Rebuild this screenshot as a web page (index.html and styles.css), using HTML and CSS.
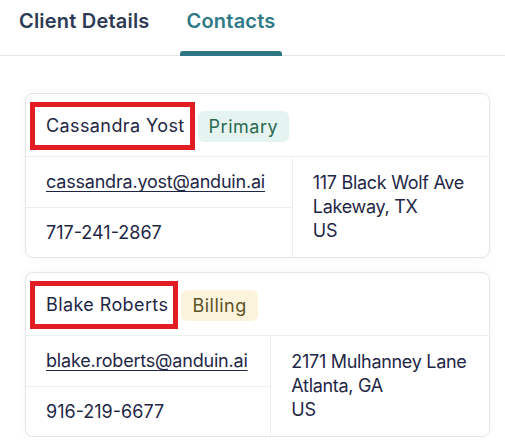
FILE: index.html
```html
<!DOCTYPE html>
<html lang="en">

<head>
  <meta charset="UTF-8">
  <meta name="viewport" content="width=device-width, initial-scale=1.0">
  <title>Contacts</title>
  <link rel="stylesheet" href="styles.css">
</head>

<body>
  <div class="tabs">
    <div class="tab">Client Details</div>
    <div class="tab active">Contacts</div>
  </div>

  <div class="contacts">
    <div class="card">
      <div class="card-header">
        <span class="name">Cassandra Yost</span>
        <span class="badge primary">Primary</span>
      </div>
      <table class="info">
        <tr>
          <td class="cell"><a href="#">cassandra.yost@anduin.ai</a></td>
          <td class="cell address" rowspan="2">117 Black Wolf Ave<br>Lakeway, TX<br>US</td>
        </tr>
        <tr>
          <td class="cell">717-241-2867</td>
        </tr>
      </table>
    </div>

    <div class="card">
      <div class="card-header">
        <span class="name">Blake Roberts</span>
        <span class="badge billing">Billing</span>
      </div>
      <table class="info">
        <tr>
          <td class="cell"><a href="#">blake.roberts@anduin.ai</a></td>
          <td class="cell address" rowspan="2">2171 Mulhanney Lane<br>Atlanta, GA<br>US</td>
        </tr>
        <tr>
          <td class="cell">916-219-6677</td>
        </tr>
      </table>
    </div>
  </div>
</body>

</html>
```

FILE: styles.css
```css
* {
  margin: 0;
  padding: 0;
  box-sizing: border-box;
}

body {
  background: #fff;
  font-family: Inter, "Noto Sans", sans-serif;
  color: #1f2747;
}

.tabs {
  display: flex;
  gap: 23px;
  padding-left: 12px;
  height: 56px;
  border-bottom: 1px solid #e3e5e8;
}

.tab {
  position: relative;
  padding: 9px 7px 0 7px;
  font-size: 20px;
  line-height: 24px;
  font-weight: 600;
  letter-spacing: 0.2px;
  color: #2d3a55;
}

.tab.active {
  color: #2f7a86;
}

.tab.active::after {
  content: "";
  position: absolute;
  left: 0;
  right: 0;
  bottom: -1px;
  height: 5px;
  border-radius: 3px 3px 0 0;
  background: #2e7682;
}

.contacts {
  display: flex;
  flex-direction: column;
  gap: 14px;
  padding: 37px 15px 0 25px;
}

.card {
  border: 1px solid #e3e5e8;
  border-radius: 8px;
  box-shadow: 0 0 10px rgba(0, 0, 0, 0.04);
  background: #fff;
}

.card-header {
  display: flex;
  align-items: center;
  gap: 3px;
  padding: 8px 4px 6px 4px;
  border-bottom: 1px solid #eceef0;
}

.name {
  border: 5px solid #e21d23;
  padding: 0 5px 0 11px;
  height: 48px;
  line-height: 38px;
  font-size: 18px;
  letter-spacing: 0.4px;
  color: #1e2645;
}

.badge {
  height: 31px;
  line-height: 31px;
  padding: 0 11px;
  border-radius: 6px;
  font-size: 18px;
  letter-spacing: 0.5px;
}

.primary {
  background: #e6f4f1;
  color: #2c6a52;
}

.billing {
  background: #fbf3dc;
  color: #5e5125;
}

.info {
  width: 100%;
  border-collapse: collapse;
  font-size: 18px;
}

.cell {
  height: 50px;
  padding: 0 20px;
  vertical-align: middle;
  white-space: nowrap;
}

tr:first-child .cell:first-child {
  border-bottom: 1px solid #eceef0;
}

.cell a {
  color: #1f2747;
  text-decoration: underline;
  text-underline-offset: 3px;
  letter-spacing: -0.2px;
}

.address {
  border-left: 1px solid #eceef0;
  line-height: 24px;
  letter-spacing: -0.3px;
}
```
